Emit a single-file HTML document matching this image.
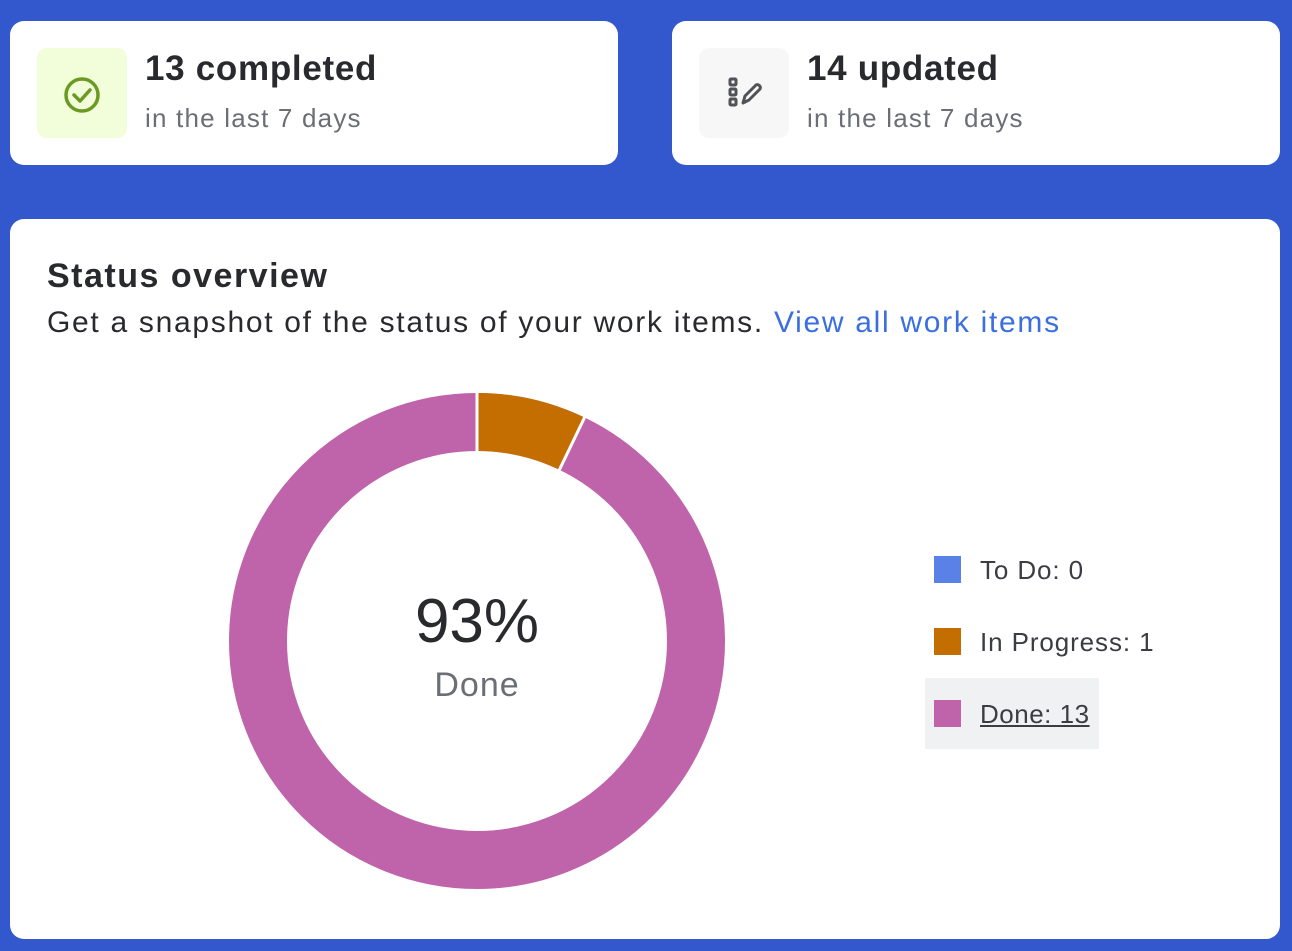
<!DOCTYPE html><html><head><style>
body{margin:0;width:1292px;height:951px;background:#3357cc;font-family:"Liberation Sans",sans-serif;position:relative;overflow:hidden}
.card{position:absolute;background:#fff;border-radius:14px}
.ic{position:absolute;left:27px;top:27px;width:90px;height:90px;border-radius:10px}
.t1{position:absolute;left:135px;top:28px;font-size:35px;font-weight:bold;color:#292a2e;letter-spacing:0.7px}
.t2{position:absolute;left:135px;top:82px;font-size:26px;color:#6b6e76;letter-spacing:1.2px}
.lg{position:absolute;left:934px;font-size:26px;color:#3b3d42;letter-spacing:0.9px}
.lg i{display:inline-block;width:27px;height:27px;vertical-align:-4px;margin-right:19px}
</style></head><body>
<div class="card" style="left:10px;top:21px;width:608px;height:144px">
<div class="ic" style="background:#f2fdd9"><svg width="90" height="90" viewBox="0 0 90 90"><circle cx="45" cy="47" r="16" fill="none" stroke="#6a9a23" stroke-width="3.5"/><path d="M37 47l6 6 10-11" fill="none" stroke="#6a9a23" stroke-width="3.5" stroke-linecap="round" stroke-linejoin="round"/></svg></div>
<div class="t1">13 completed</div><div class="t2">in the last 7 days</div></div>
<div class="card" style="left:672px;top:21px;width:608px;height:144px">
<div class="ic" style="background:#f7f7f8"><svg width="90" height="90" viewBox="0 0 90 90" fill="none" stroke="#505258" stroke-width="3"><rect x="31" y="31" width="6" height="6" rx="1"/><rect x="31" y="41" width="6" height="6" rx="1"/><rect x="31" y="51" width="6" height="6" rx="1"/><path d="M44 55l2-7 11-11a3 3 0 0 1 4 4L50 52z" stroke-linejoin="round"/></svg></div>
<div class="t1">14 updated</div><div class="t2">in the last 7 days</div></div>
<div class="card" style="left:10px;top:219px;width:1270px;height:720px">
<div style="position:absolute;left:37px;top:38px;font-size:34px;font-weight:bold;color:#292a2e;letter-spacing:1.5px">Status overview</div>
<div style="position:absolute;left:37px;top:87px;font-size:30px;color:#292a2e;letter-spacing:1.7px;white-space:nowrap">Get a snapshot of the status of your work items. <span style="color:#3b6fe0">View all work items</span></div>
</div>
<svg style="position:absolute;left:0;top:0" width="1292" height="951">
<g transform="rotate(-90 477 641)">
<circle cx="477" cy="641" r="219" fill="none" stroke="#bf63aa" stroke-width="58"/>
<circle cx="477" cy="641" r="219" fill="none" stroke="#c46d00" stroke-width="58" stroke-dasharray="98.3 2000"/>
<line x1="477" y1="641" x2="730" y2="641" stroke="#fff" stroke-width="3"/>
<line x1="477" y1="641" x2="730" y2="641" stroke="#fff" stroke-width="3" transform="rotate(25.7 477 641)"/>
</g>
<text x="477" y="642" font-size="62" text-anchor="middle" fill="#292a2e" font-family="Liberation Sans">93%</text>
<text x="477" y="696" font-size="34" text-anchor="middle" fill="#6b6e76" font-family="Liberation Sans" letter-spacing="1">Done</text>
</svg>
<div class="lg" style="top:555px"><i style="background:#5a81e6"></i>To Do: 0</div>
<div class="lg" style="top:627px"><i style="background:#c46d00"></i>In Progress: 1</div>
<div style="position:absolute;left:925px;top:678px;width:174px;height:71px;background:#f0f1f2"></div>
<div class="lg" style="top:699px;letter-spacing:0.5px"><i style="background:#bf63aa"></i><u>Done: 13</u></div>
</body></html>
